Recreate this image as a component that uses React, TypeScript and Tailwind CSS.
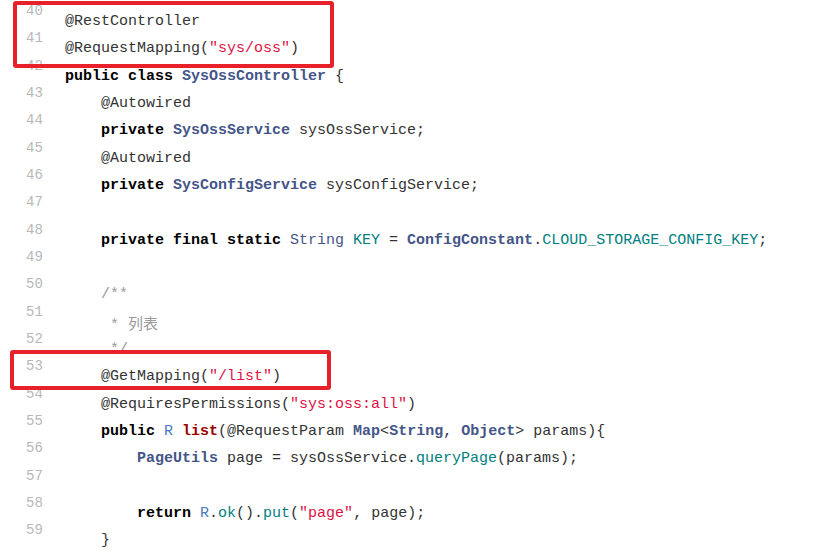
import type { ReactNode } from "react";

type Tok = [string, string?];

const K = "font-bold text-black";
const T = "font-bold text-[#445588]";
const TL = "text-[#4a78c2]";
const S = "text-[#dd1144]";
const F = "text-[#008080]";
const FN = "font-bold text-[#990000]";
const C = "text-[#999999]";
const A = "text-[#333333]";

const lines: { n: number; indent: number; toks: Tok[] }[] = [
  { n: 40, indent: 0, toks: [["@RestController", A]] },
  { n: 41, indent: 0, toks: [["@RequestMapping(", A], ['"sys/oss"', S], [")", A]] },
  { n: 42, indent: 0, toks: [["public class ", K], ["SysOssController", T], [" {"]] },
  { n: 43, indent: 1, toks: [["@Autowired", A]] },
  { n: 44, indent: 1, toks: [["private ", K], ["SysOssService", T], [" sysOssService;"]] },
  { n: 45, indent: 1, toks: [["@Autowired", A]] },
  { n: 46, indent: 1, toks: [["private ", K], ["SysConfigService", T], [" sysConfigService;"]] },
  { n: 47, indent: 0, toks: [] },
  {
    n: 48,
    indent: 1,
    toks: [
      ["private final static ", K],
      ["String", "text-[#445588]"],
      [" "],
      ["KEY", F],
      [" = "],
      ["ConfigConstant", T],
      ["."],
      ["CLOUD_STORAGE_CONFIG_KEY", F],
      [";"],
    ],
  },
  { n: 49, indent: 0, toks: [] },
  { n: 50, indent: 1, toks: [["/**", C]] },
  { n: 51, indent: 1, toks: [[" * ", C], ["列表", C + " cjk"]] },
  { n: 52, indent: 1, toks: [[" */", C]] },
  { n: 53, indent: 1, toks: [["@GetMapping(", A], ['"/list"', S], [")", A]] },
  { n: 54, indent: 1, toks: [["@RequiresPermissions(", A], ['"sys:oss:all"', S], [")", A]] },
  {
    n: 55,
    indent: 1,
    toks: [
      ["public ", K],
      ["R", TL],
      [" "],
      ["list", FN],
      ["(@RequestParam "],
      ["Map", T],
      ["<"],
      ["String", T],
      [", "],
      ["Object", T],
      ["> params){"],
    ],
  },
  {
    n: 56,
    indent: 2,
    toks: [["PageUtils", T], [" page = sysOssService."], ["queryPage", F], ["(params);"]],
  },
  { n: 57, indent: 0, toks: [] },
  {
    n: 58,
    indent: 2,
    toks: [["return ", K], ["R", TL], ["."], ["ok", F], ["()."], ["put", F], ["("], ['"page"', S], [", page);"]],
  },
  { n: 59, indent: 1, toks: [["}"]] },
  { n: 60, indent: 0, toks: [] },
];

function Code({ toks }: { toks: Tok[] }): ReactNode {
  return toks.map(([text, cls], i) =>
    cls && cls.includes("cjk") ? (
      <span
        key={i}
        className={cls.replace("cjk", "")}
        style={{ fontFamily: '"Noto Sans CJK SC", sans-serif' }}
      >
        {text}
      </span>
    ) : (
      <span key={i} className={cls ?? "text-[#333333]"}>
        {text}
      </span>
    ),
  );
}

export default function App() {
  return (
    <div className="relative w-[840px] h-[551px] overflow-hidden bg-white font-['Liberation_Mono',monospace]">
      <div className="flex flex-col pt-[8px]">
        {lines.map((l) => (
          <div key={l.n} className="flex h-[27.33px] items-start">
            <div className="w-[65px] shrink-0 pl-[26px] -mt-[4px] text-[14px] leading-[14px] text-[#b8b8b8]">
              {l.n}
            </div>
            <div
              className={`whitespace-pre text-[15px] leading-[27.33px] ${
                l.indent === 1 ? "pl-[36px]" : l.indent === 2 ? "pl-[72px]" : ""
              }`}
            >
              <Code toks={l.toks} />
            </div>
          </div>
        ))}
      </div>

      <div className="absolute left-[13px] top-[1px] w-[321px] h-[67px] rounded-[3px] border-[4px] border-[#e8202a]" />
      <div className="absolute left-[10px] top-[350px] w-[321px] h-[40px] rounded-[3px] border-[4px] border-[#e8202a]" />
    </div>
  );
}
